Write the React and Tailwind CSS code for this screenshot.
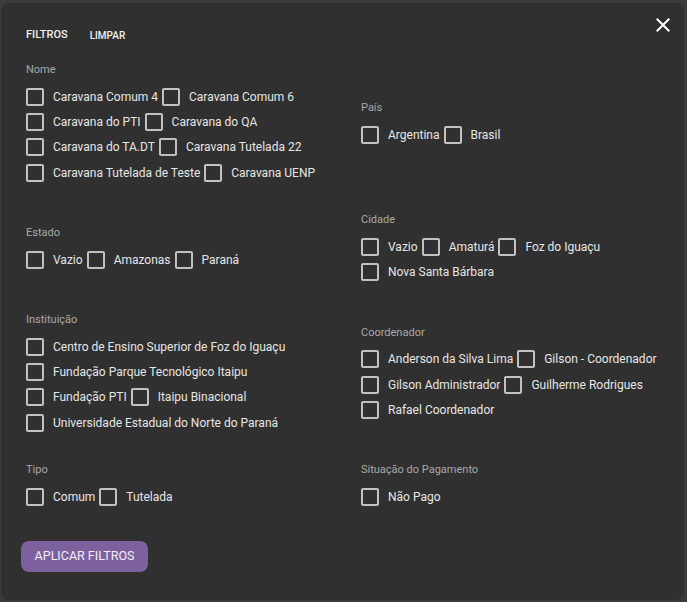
import React from 'react';

const sectionsLeft = [
  {
    title: 'Nome',
    rows: [
      ['Caravana Comum 4', 'Caravana Comum 6'],
      ['Caravana do PTI', 'Caravana do QA'],
      ['Caravana do TA.DT', 'Caravana Tutelada 22'],
      ['Caravana Tutelada de Teste', 'Caravana UENP'],
    ],
  },
  { title: 'Estado', rows: [['Vazio', 'Amazonas', 'Paraná']] },
  {
    title: 'Instituição',
    rows: [
      ['Centro de Ensino Superior de Foz do Iguaçu'],
      ['Fundação Parque Tecnológico Itaipu'],
      ['Fundação PTI', 'Itaipu Binacional'],
      ['Universidade Estadual do Norte do Paraná'],
    ],
  },
  { title: 'Tipo', rows: [['Comum', 'Tutelada']] },
];

const sectionsRight = [
  { title: 'País', rows: [['Argentina', 'Brasil']] },
  {
    title: 'Cidade',
    rows: [['Vazio', 'Amaturá', 'Foz do Iguaçu'], ['Nova Santa Bárbara']],
  },
  {
    title: 'Coordenador',
    rows: [
      ['Anderson da Silva Lima', 'Gilson - Coordenador'],
      ['Gilson Administrador', 'Guilherme Rodrigues'],
      ['Rafael Coordenador'],
    ],
  },
  { title: 'Situação do Pagamento', rows: [['Não Pago']] },
];

const CheckBox = () => (
  <svg width="18" height="18" viewBox="3 3 18 18" className="shrink-0" fill="rgba(255,255,255,0.7)">
    <path d="M19 5v14H5V5h14m0-2H5c-1.11 0-2 .9-2 2v14c0 1.1.89 2 2 2h14c1.1 0 2-.9 2-2V5c0-1.1-.9-2-2-2z" />
  </svg>
);

const Section = ({ title, rows }) => (
  <div className="flex flex-col">
    <div className="h-[14px] leading-[14px] text-[11px] text-[#a8a8a8] mb-[7px]">{title}</div>
    {rows.map((row, i) => (
      <div key={i} className="flex items-center h-[25.33px]">
        {row.map(label => (
          <div key={label} className="flex items-center mr-[4px]">
            <CheckBox />
            <span className="ml-[9px] text-[12px] text-[#e6e6e6] whitespace-nowrap">{label}</span>
          </div>
        ))}
      </div>
    ))}
  </div>
);

const App = () => {
  return (
    <div className="w-[687px] h-[602px] bg-[#3b3b3b] pt-[3px] pl-[1px] pr-[3px] pb-[2px]" style={{ fontFamily: "Roboto, 'Liberation Sans', sans-serif" }}>
      <div className="relative h-full bg-[#303030] rounded-lg pt-[22px] pl-[25px]">
        {/* Close */}
        <button className="absolute left-[650px] top-[10px] w-6 h-6">
          <svg width="24" height="24" viewBox="0 0 24 24" fill="#ffffff">
            <path d="M19 6.41L17.59 5 12 10.59 6.41 5 5 6.41 10.59 12 5 17.59 6.41 19 12 13.41 17.59 19 19 17.59 13.41 12z" />
          </svg>
        </button>

        {/* Header */}
        <div className="flex items-center h-[20px] mb-[18px]">
          <span className="text-[11px] font-medium text-[#f0f0f0] uppercase">Filtros</span>
          <span className="ml-[22px] text-[10px] font-medium text-[#f0f0f0] uppercase">Limpar</span>
        </div>

        {/* Filter grid */}
        <div className="grid grid-cols-[335px_1fr] gap-y-[28px] items-center">
          {sectionsLeft.map((s, i) => (
            <React.Fragment key={s.title}>
              <Section {...s} />
              <Section {...sectionsRight[i]} />
            </React.Fragment>
          ))}
        </div>

        <button className="mt-[31px] -ml-[5px] h-[31px] w-[127px] rounded-lg bg-[#7c619e] text-[12.5px] text-[#f3eefa] uppercase">
          Aplicar Filtros
        </button>
      </div>
    </div>
  );
};

export default App;
